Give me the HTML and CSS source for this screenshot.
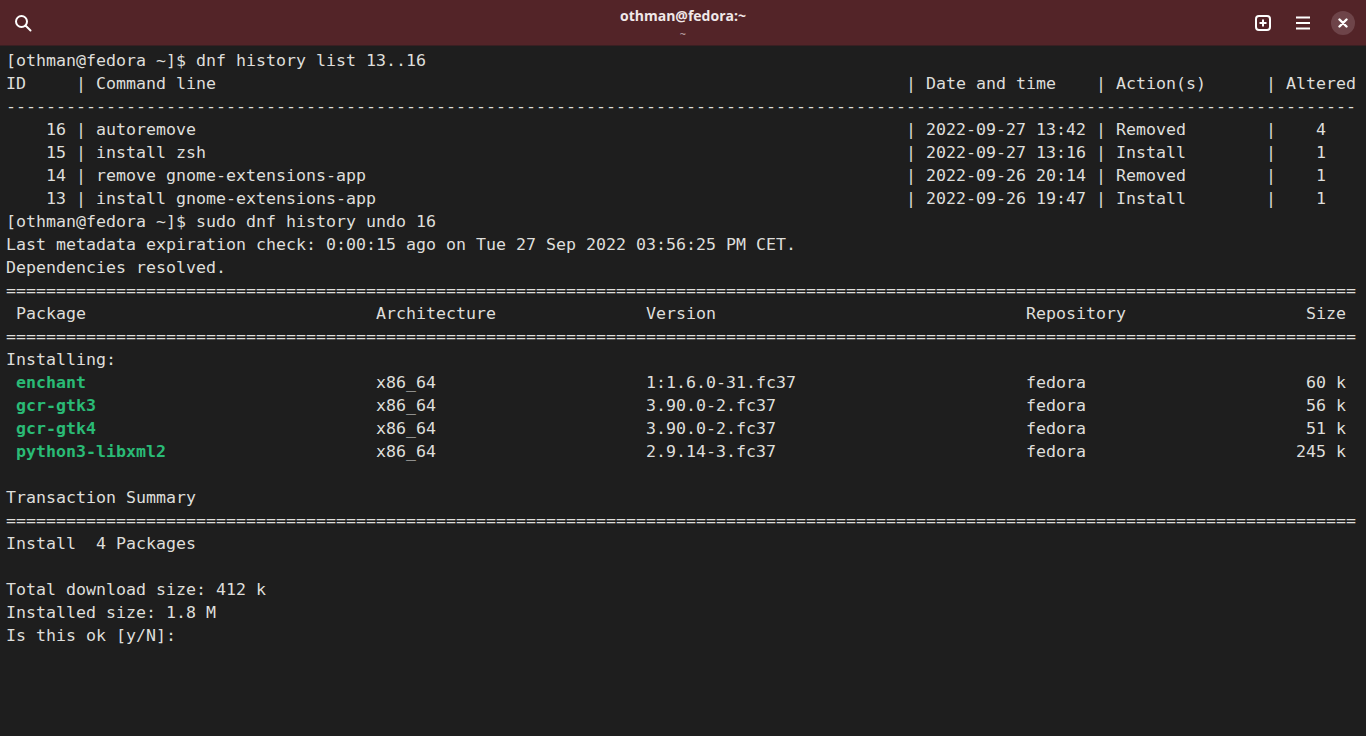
FILE: index.html
```html
<!DOCTYPE html>
<html lang="en">
<head>
<meta charset="utf-8">
<title>othman@fedora:~</title>
<link rel="stylesheet" href="styles.css">
</head>
<body>
<div class="window">
<header class="headerbar">
  <div class="side">
    <button class="icon-btn icon-btn-start" aria-label="Search">
      <svg class="icon" viewBox="0 0 18 18"><circle cx="7.5" cy="7.5" r="5.5"/><path d="M11.5 11.5 16.5 16.5"/></svg>
    </button>
  </div>
  <div class="titles">
    <div class="title">othman@fedora:~</div>
    <div class="subtitle">~</div>
  </div>
  <div class="side side-end">
    <button class="icon-btn" aria-label="New tab">
      <svg class="icon icon-thin" viewBox="0 0 16 16"><rect x="1" y="1" width="14" height="14" rx="3"/><path d="M8 4.5v7M4.5 8h7"/></svg>
    </button>
    <button class="icon-btn" aria-label="Menu">
      <svg class="icon icon-thin" viewBox="0 0 16 16"><path d="M1 2.5h14M1 8h14M1 13.5h14"/></svg>
    </button>
    <button class="close-btn" aria-label="Close">
      <svg class="icon icon-close" viewBox="0 0 10 10"><path d="M1.5 1.5l7 7M8.5 1.5l-7 7"/></svg>
    </button>
  </div>
</header>
<pre class="terminal">[othman@fedora ~]$ dnf history list 13..16
ID     | Command line                                                                     | Date and time    | Action(s)      | Altered
---------------------------------------------------------------------------------------------------------------------------------------
    16 | autoremove                                                                       | 2022-09-27 13:42 | Removed        |    4
    15 | install zsh                                                                      | 2022-09-27 13:16 | Install        |    1
    14 | remove gnome-extensions-app                                                      | 2022-09-26 20:14 | Removed        |    1
    13 | install gnome-extensions-app                                                     | 2022-09-26 19:47 | Install        |    1
[othman@fedora ~]$ sudo dnf history undo 16
Last metadata expiration check: 0:00:15 ago on Tue 27 Sep 2022 03:56:25 PM CET.
Dependencies resolved.
=======================================================================================================================================
 Package                             Architecture               Version                               Repository                  Size 
=======================================================================================================================================
Installing:
 <b class="pkg">enchant</b>                             x86_64                     1:1.6.0-31.fc37                       fedora                      60 k
 <b class="pkg">gcr-gtk3</b>                            x86_64                     3.90.0-2.fc37                         fedora                      56 k
 <b class="pkg">gcr-gtk4</b>                            x86_64                     3.90.0-2.fc37                         fedora                      51 k
 <b class="pkg">python3-libxml2</b>                     x86_64                     2.9.14-3.fc37                         fedora                     245 k

Transaction Summary
=======================================================================================================================================
Install  4 Packages

Total download size: 412 k
Installed size: 1.8 M
Is this ok [y/N]: </pre>
</div>
</body>
</html>
```
FILE: styles.css
```css
* { box-sizing: border-box; }
html, body { margin: 0; height: 100%; background: #1e1e1e; overflow: hidden; }
.window { display: flex; flex-direction: column; height: 736px; }
.headerbar {
  flex: 0 0 46px;
  display: grid;
  grid-template-columns: 1fr auto 1fr;
  align-items: center;
  padding: 0 11px;
  background: #532428;
  border-bottom: 1px solid #3a1f22;
}
.side { display: flex; align-items: center; }
.side-end { justify-content: flex-end; }
.icon-btn {
  width: 40px; height: 34px; padding: 0; border: 0; background: none;
  display: flex; align-items: center; justify-content: center;
}
.icon-btn-start { margin-left: -8px; }
.icon { width: 18px; height: 18px; fill: none; stroke: #fff; stroke-width: 2; stroke-linecap: round; }
.icon-thin { width: 16px; height: 16px; stroke-linecap: butt; }
.close-btn {
  width: 24px; height: 24px; margin-left: 8px; padding: 0; border: 0; border-radius: 50%;
  background: #6e4449;
  display: flex; align-items: center; justify-content: center;
}
.icon-close { width: 10px; height: 10px; stroke-width: 2.4; }
.titles {
  display: flex; flex-direction: column; align-items: center;
  font-family: "Open Sans", "Noto Sans", sans-serif; color: #f0e8e8;
}
.title { font-size: 14px; font-weight: 700; line-height: 18px; margin-top: 3px; }
.subtitle { font-size: 11px; line-height: 14px; color: #c8b4b6; margin-top: 2px; }
.terminal {
  margin: 0;
  padding: 3px 0 0 6px;
  font-family: "DejaVu Sans Mono", "Liberation Mono", monospace;
  font-size: 16.61px;
  line-height: 23px;
  color: #dededb;
  background: #1e1e1e;
  flex: 1;
}
.pkg { font-weight: 700; color: #2abb76; }
```
